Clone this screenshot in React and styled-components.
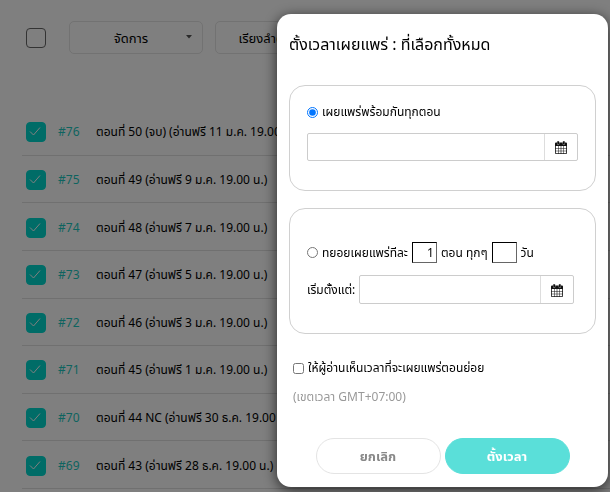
import React from 'react'
import styled, { createGlobalStyle, css } from 'styled-components'

const GlobalStyle = createGlobalStyle`
  * {
    box-sizing: border-box;
  }
  body {
    margin: 0;
    background: #fff;
    color: #000;
    font-family: Tahoma, "Noto Sans", "Noto Sans Thai", sans-serif;
    font-size: 12px;
    line-height: 20px;
  }
  button, input, select {
    font: inherit;
    color: inherit;
  }
`

const Page = styled.main`
  display: flex;
  flex-direction: column;
  height: 100vh;
  min-height: 480px;
  padding: 21px 0 3px 22px;
  overflow: hidden;
`

const Toolbar = styled.div`
  display: flex;
  align-items: center;
  gap: 12px;
  height: 33px;
  margin-bottom: 54px;
  padding-left: 4px;
`

const Tick = styled.span`
  position: relative;
  display: flex;
  flex: none;
  width: 20px;
  height: 20px;

  input {
    appearance: none;
    width: 20px;
    height: 20px;
    margin: 0;
    border: 1px solid #666;
    border-radius: 4px;
    background: #fff;
  }
  input:checked {
    border-color: #00d8ce;
    background: #00d8ce;
  }
  svg {
    position: absolute;
    inset: 0;
    pointer-events: none;
  }
`

const ToolbarTick = styled(Tick)`
  margin-right: 11px;
`

const SelectWrap = styled.div`
  position: relative;
  flex: none;
  width: 134px;
  height: 33px;

  select {
    appearance: none;
    width: 100%;
    height: 100%;
    padding: 0 16px 0 6px;
    border: 1px solid #e4e4e4;
    border-radius: 5px;
    background: #fff;
    font-size: 13px;
    text-align: center;
    text-align-last: center;
  }
  svg {
    position: absolute;
    top: 14px;
    right: 11px;
    pointer-events: none;
  }
`

const Episodes = styled.ul`
  display: grid;
  flex: 1;
  grid-auto-rows: 1fr;
  margin: 0;
  padding: 0;
  list-style: none;
`

const Episode = styled.li`
  display: flex;
  align-items: center;
  padding: 2px 0 0 4px;
  border-bottom: 1px solid #e0e0e0;
  white-space: nowrap;
`

const EpisodeLink = styled.a`
  flex: none;
  width: 38px;
  margin-left: 12px;
  color: #1cc8c0;
  text-decoration: none;
`

const Overlay = styled.div`
  position: fixed;
  inset: 0;
  display: flex;
  align-items: flex-start;
  justify-content: flex-end;
  padding: 14px 2px 5px;
  background: rgba(0, 0, 0, 0.5);
`

const Dialog = styled.form`
  display: flex;
  flex-direction: column;
  width: min(331px, 100%);
  padding: 20px 12px 13px;
  border-radius: 14px;
  background: #fff;
  box-shadow: 0 3px 14px rgba(0, 0, 0, 0.7);
`

const Title = styled.h2`
  margin: 0 0 31px;
  font-size: 16px;
  font-weight: 400;
  line-height: 20px;
`

const Box = styled.fieldset`
  display: flex;
  flex-direction: column;
  min-width: 0;
  margin: 0 0 17px;
  border: 1px solid #d0d0d0;
  border-radius: 16px;
  padding: ${(p) => (p.$tall ? '33px 21px 29px 17px' : '16px 17px 29px')};
`

const Line = styled.div`
  display: flex;
  align-items: center;
  gap: 4px;
  white-space: nowrap;

  input[type='radio'] {
    flex: none;
    width: 11px;
    height: 11px;
    margin: 0;
  }
`

const CountInput = styled.input`
  width: 25px;
  height: 21px;
  padding: 0 2px;
  border: 1px solid #000;
  border-right-color: #666;
  border-bottom-color: #666;
  background: #fff;
  text-align: right;
`

const DateField = styled.div`
  display: flex;
  flex: 1;
  min-width: 0;
  height: ${(p) => (p.$tall ? '29px' : '28px')};
  border: 1px solid #ccc;
  border-radius: 2px;

  input {
    flex: 1;
    min-width: 0;
    padding: 0 8px;
    border: 0;
    background: none;
  }
  button {
    display: flex;
    align-items: center;
    justify-content: center;
    width: 33px;
    padding: 1px 0 0;
    border: 0;
    border-left: 1px solid #ddd;
    background: none;
  }
`

const DateRow = styled.div`
  display: flex;
  align-items: center;
  gap: 4px;
  margin-top: 12px;
  white-space: nowrap;

  ${(p) => p.$full && css`
    margin-top: 11px;
  `}
`

const ShowLine = styled.label`
  display: flex;
  align-items: center;
  gap: 4px;
  margin-top: 7px;
  padding-left: 4px;
  white-space: nowrap;

  input {
    width: 11px;
    height: 11px;
    margin: 0;
  }
`

const Zone = styled.p`
  margin: 9px 0 31px;
  padding-left: 4px;
  color: #999;
`

const Actions = styled.div`
  display: flex;
  justify-content: center;
  gap: 4px;
`

const Button = styled.button`
  width: 125px;
  height: 36px;
  padding: 0;
  border: 1px solid ${(p) => (p.$primary ? '#5adfd9' : '#e4e4e4')};
  border-radius: 18px;
  background: ${(p) => (p.$primary ? '#5adfd9' : '#fff')};
  color: ${(p) => (p.$primary ? '#fff' : '#888')};
  font-size: 13px;
  font-weight: 700;
`

const episodes = [
  { no: 76, name: 'ตอนที่ 50 (จบ) (อ่านฟรี 11 ม.ค. 19.00 น.)' },
  { no: 75, name: 'ตอนที่ 49 (อ่านฟรี 9 ม.ค. 19.00 น.)' },
  { no: 74, name: 'ตอนที่ 48 (อ่านฟรี 7 ม.ค. 19.00 น.)' },
  { no: 73, name: 'ตอนที่ 47 (อ่านฟรี 5 ม.ค. 19.00 น.)' },
  { no: 72, name: 'ตอนที่ 46 (อ่านฟรี 3 ม.ค. 19.00 น.)' },
  { no: 71, name: 'ตอนที่ 45 (อ่านฟรี 1 ม.ค. 19.00 น.)' },
  { no: 70, name: 'ตอนที่ 44 NC (อ่านฟรี 30 ธ.ค. 19.00 น.)' },
  { no: 69, name: 'ตอนที่ 43 (อ่านฟรี 28 ธ.ค. 19.00 น.)' },
]

const Caret = () => (
  <svg width="6" height="4" viewBox="0 0 6 4" aria-hidden="true">
    <path d="M0 0h6L3 3.5z" fill="#555" />
  </svg>
)

const CalendarIcon = () => (
  <svg width="12" height="13" viewBox="0 0 12 13" aria-hidden="true">
    <path d="M1 1.5h10a1 1 0 0 1 1 1V12a1 1 0 0 1-1 1H1a1 1 0 0 1-1-1V2.5a1 1 0 0 1 1-1z" fill="#111" />
    <path d="M.8 5H3v2.200H.8zM3.500 5h2.200v2.200H3.500zM6.300 5h2.200v2.200H6.300zM9 5h2.200v2.200H9zM.8 7.700H3v2.100H.8zM3.500 7.700h2.200v2.100H3.500zM6.300 7.700h2.200v2.100H6.300zM9 7.700h2.200v2.100H9zM.8 10.300H3v1.900H.8zM3.500 10.300h2.200v1.900H3.500zM6.300 10.300h2.200v1.900H6.300zM9 10.300h2.200v1.900H9z" fill="#fff" />
    <path d="M3.200 1v1.800M8.800 1v1.800" stroke="#999" strokeWidth="2.400" strokeLinecap="round" />
    <path d="M3.200 1v1.800M8.800 1v1.800" stroke="#111" strokeWidth="1.600" strokeLinecap="round" />
  </svg>
)

function DropDown({ label }) {
  return (
    <SelectWrap>
      <select aria-label={label}>
        <option>{label}</option>
      </select>
      <Caret />
    </SelectWrap>
  )
}

function DatePicker({ id, label, tall }) {
  return (
    <DateField $tall={tall}>
      <input id={id} type="text" aria-label={label} />
      <button type="button" aria-label="เลือกวันที่">
        <CalendarIcon />
      </button>
    </DateField>
  )
}

export default function App() {
  return (
    <>
      <GlobalStyle />
      <Page>
        <Toolbar>
          <ToolbarTick>
            <input type="checkbox" aria-label="เลือกทั้งหมด" />
          </ToolbarTick>
          <DropDown label="จัดการ" />
          <DropDown label="เรียงลำดับตอน" />
        </Toolbar>
        <Episodes>
          {episodes.map((ep) => (
            <Episode key={ep.no}>
              <Tick>
                <input type="checkbox" id={`ep-${ep.no}`} defaultChecked />
                <svg width="20" height="20" viewBox="0 0 20 20" aria-hidden="true">
                  <path d="M4 9.500l3.500 3.500L14 5.500" fill="none" stroke="#fff" />
                </svg>
              </Tick>
              <EpisodeLink href={`#${ep.no}`}>#{ep.no}</EpisodeLink>
              <label htmlFor={`ep-${ep.no}`}>{ep.name}</label>
            </Episode>
          ))}
        </Episodes>
      </Page>

      <Overlay>
        <Dialog role="dialog" aria-labelledby="dialog-title">
          <Title id="dialog-title">ตั้งเวลาเผยแพร่ : ที่เลือกทั้งหมด</Title>

          <Box>
            <Line>
              <input type="radio" name="mode" id="mode-all" defaultChecked />
              <label htmlFor="mode-all">เผยแพร่พร้อมกันทุกตอน</label>
            </Line>
            <DateRow $full>
              <DatePicker label="เวลาเผยแพร่" />
            </DateRow>
          </Box>

          <Box $tall>
            <Line>
              <input type="radio" name="mode" id="mode-step" />
              <label htmlFor="mode-step">ทยอยเผยแพร่ทีละ</label>
              <CountInput type="text" defaultValue="1" aria-label="จำนวนตอน" />
              <label htmlFor="every">ตอน ทุกๆ</label>
              <CountInput type="text" id="every" />
              <span>วัน</span>
            </Line>
            <DateRow>
              <label htmlFor="start">เริ่มตั้งแต่:</label>
              <DatePicker id="start" tall />
            </DateRow>
          </Box>

          <ShowLine>
            <input type="checkbox" />
            ให้ผู้อ่านเห็นเวลาที่จะเผยแพร่ตอนย่อย
          </ShowLine>
          <Zone>(เขตเวลา GMT+07:00)</Zone>

          <Actions>
            <Button type="button">ยกเลิก</Button>
            <Button type="submit" $primary>ตั้งเวลา</Button>
          </Actions>
        </Dialog>
      </Overlay>
    </>
  )
}
